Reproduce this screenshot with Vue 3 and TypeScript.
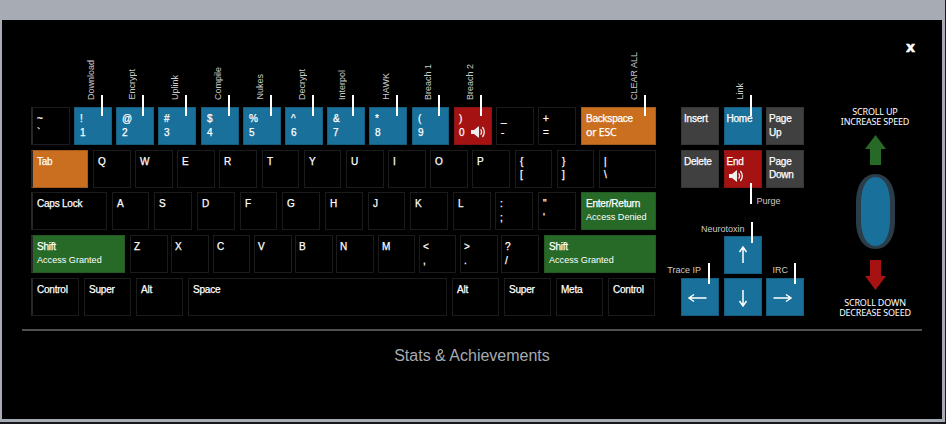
<script setup lang="ts">
type Tone = 'plain' | 'blue' | 'red' | 'orange' | 'green' | 'gray'

interface Key {
  start: number
  end: number
  lines: string[]
  tone: Tone
  tag?: string
  mark?: number
  sound?: boolean
  kind?: string
}

const BOARD_LEFT = 31

const k = (start: number, end: number, text: string, tone: Tone = 'plain', extra: Partial<Key> = {}): Key => ({
  start,
  end,
  lines: text.split('\n'),
  tone,
  ...extra,
})

const rows: Key[][] = [
  [
    k(31, 70, '~\n`'),
    k(74, 112, '!\n1', 'blue', { tag: 'Download', mark: 26 }),
    k(116, 154, '@\n2', 'blue', { tag: 'Encrypt', mark: 25 }),
    k(158, 196, '#\n3', 'blue', { tag: 'Uplink', mark: 26 }),
    k(201, 239, '$\n4', 'blue', { tag: 'Compile', mark: 26 }),
    k(243, 281, '%\n5', 'blue', { tag: 'Nukes', mark: 26 }),
    k(285, 323, '^\n6', 'blue', { tag: 'Decrypt', mark: 26 }),
    k(327, 365, '&\n7', 'blue', { tag: 'Interpol', mark: 24 }),
    k(369, 407, '*\n8', 'blue', { tag: 'HAWK', mark: 26 }),
    k(412, 449, '(\n9', 'blue', { tag: 'Breach 1', mark: 25 }),
    k(454, 492, ')\n0', 'red', { tag: 'Breach 2', mark: 25, sound: true }),
    k(496, 534, '_\n-'),
    k(538, 576, '+\n='),
    k(581, 656, 'Backspace\nor ESC', 'orange', { tag: 'CLEAR ALL', mark: 62, kind: 'escape' }),
  ],
  [
    k(31, 88, 'Tab', 'orange'),
    k(93, 131, 'Q'),
    k(135, 173, 'W'),
    k(177, 215, 'E'),
    k(219, 257, 'R'),
    k(262, 299, 'T'),
    k(304, 341, 'Y'),
    k(346, 384, 'U'),
    k(388, 426, 'I'),
    k(430, 468, 'O'),
    k(472, 510, 'P'),
    k(515, 552, '{\n['),
    k(557, 594, '}\n]'),
    k(599, 656, '|\n\\'),
  ],
  [
    k(31, 107, 'Caps Lock'),
    k(112, 149, 'A'),
    k(154, 192, 'S'),
    k(197, 235, 'D'),
    k(240, 277, 'F'),
    k(282, 320, 'G'),
    k(325, 363, 'H'),
    k(368, 405, 'J'),
    k(410, 448, 'K'),
    k(453, 491, 'L'),
    k(495, 533, ':\n;'),
    k(538, 576, '"\n\''),
    k(581, 656, 'Enter/Return\nAccess Denied', 'green', { kind: 'access' }),
  ],
  [
    k(31, 125, 'Shift\nAccess Granted', 'green', { kind: 'access' }),
    k(130, 168, 'Z'),
    k(171, 209, 'X'),
    k(213, 250, 'C'),
    k(254, 292, 'V'),
    k(295, 333, 'B'),
    k(336, 374, 'N'),
    k(378, 415, 'M'),
    k(419, 456, '<\n,'),
    k(460, 498, '>\n.'),
    k(501, 539, '?\n/'),
    k(544, 656, 'Shift\nAccess Granted', 'green', { kind: 'access' }),
  ],
  [
    k(31, 79, 'Control'),
    k(84, 131, 'Super'),
    k(136, 183, 'Alt'),
    k(188, 447, 'Space'),
    k(452, 499, 'Alt'),
    k(504, 551, 'Super'),
    k(556, 603, 'Meta'),
    k(608, 655, 'Control'),
  ],
]

const keyStyle = (row: Key[], i: number) => ({
  width: `${row[i].end - row[i].start}px`,
  marginLeft: `${row[i].start - (i ? row[i - 1].end : BOARD_LEFT)}px`,
})
</script>

<template>
  <div class="page">
    <main class="panel">
      <span class="close">x</span>
      <section class="controls">
        <div class="keyboard">
          <div v-for="(row, r) in rows" :key="r" class="row">
            <div v-for="(key, i) in row" :key="i" class="key" :class="[key.tone, key.kind]" :style="keyStyle(row, i)">
              <span v-for="(line, n) in key.lines" :key="n" class="line">{{ line }}</span>
              <svg v-if="key.sound" class="sound" viewBox="0 0 15 12">
                <path d="M0 4h3l5-4v12L3 8H0z" fill="#eee" />
                <path d="M9.6 3.4q2 2.6 0 5.2M11.4 1q3.8 5 0 10" fill="none" stroke="#eee" stroke-width="1.3" />
              </svg>
              <div v-if="key.tag" class="callout" :style="{ left: `${key.mark}px` }">
                <span class="tag">{{ key.tag }}</span>
              </div>
            </div>
          </div>
        </div>

        <div class="side">
          <div class="nav">
            <div class="key gray"><span class="line">Insert</span></div>
            <div class="key blue">
              <span class="line">Home</span>
              <div class="callout link"><span class="tag">Link</span></div>
            </div>
            <div class="key gray"><span class="line">Page</span><span class="line">Up</span></div>
            <div class="key gray"><span class="line">Delete</span></div>
            <div class="key red">
              <span class="line">End</span>
              <svg class="sound end" viewBox="0 0 15 12">
                <path d="M0 4h3l5-4v12L3 8H0z" fill="#eee" />
                <path d="M9.6 3.4q2 2.6 0 5.2M11.4 1q3.8 5 0 10" fill="none" stroke="#eee" stroke-width="1.3" />
              </svg>
              <div class="callout purge"><span class="note">Purge</span></div>
            </div>
            <div class="key gray"><span class="line">Page</span><span class="line">Down</span></div>
          </div>
          <div class="arrows">
            <div class="key blue up">
              <svg class="arrow" viewBox="0 0 38 38"><path d="M19 27V11M15.5 16L19 11l3.5 5" /></svg>
              <div class="callout neuro"><span class="note">Neurotoxin</span></div>
            </div>
            <div class="key blue left">
              <svg class="arrow" viewBox="0 0 38 38"><path d="M25.5 20H8.5M13 16.5L8 20l5 3.5" /></svg>
              <div class="callout trace"><span class="note">Trace IP</span></div>
            </div>
            <div class="key blue">
              <svg class="arrow" viewBox="0 0 38 38"><path d="M19 12V28M15.5 23L19 28l3.5-5" /></svg>
            </div>
            <div class="key blue">
              <svg class="arrow" viewBox="0 0 38 38"><path d="M7.5 20H24.5M20 16.5L25 20l-5 3.5" /></svg>
              <div class="callout irc"><span class="note">IRC</span></div>
            </div>
          </div>
        </div>

        <div class="scroll">
          <p class="caption">SCROLL UP<br />INCREASE SPEED</p>
          <svg class="pointer" viewBox="0 0 21 30"><path d="M10.5 0L21 14H16V30H5V14H0z" fill="#276a27" /></svg>
          <svg class="wheel" viewBox="0 0 39 75">
            <path d="M19.5 0C32 0 39 12 39 28V47C39 63 32 75 19.5 75S0 63 0 47V28C0 12 7 0 19.5 0z" fill="#2b3d48" />
            <path d="M19.5 3C29 3 34 15 34 29V46C34 60 29 72 19.5 72S5 60 5 46V29C5 15 10 3 19.5 3z" fill="#18709b" />
          </svg>
          <svg class="pointer" viewBox="0 0 21 30"><path d="M5 0H16V16H21L10.5 30L0 16H5z" fill="#a51212" /></svg>
          <p class="caption">SCROLL DOWN<br />DECREASE SOEED</p>
        </div>
      </section>
      <h2 class="stats">Stats &amp; Achievements</h2>
    </main>
  </div>
</template>

<style>
body {
  background: #17181c;
  overflow: hidden;
}
</style>

<style scoped>
.page {
  box-sizing: border-box;
  width: 945px;
  height: 422px;
  padding: 20px 3px 3px 2px;
  background: #a6abb4;
  font-family: "Liberation Sans", Arial, sans-serif;
}
.panel {
  position: relative;
  box-sizing: border-box;
  height: 399px;
  padding: 87px 20px 0;
  background: #000;
}
.close {
  position: absolute;
  top: 17px;
  right: 27px;
  color: #fff;
  font: bold 14px/20px "DejaVu Sans", sans-serif;
  -webkit-text-stroke: 0.5px #fff;
}
.controls {
  display: flex;
  box-sizing: border-box;
  height: 224px;
  padding-left: 9px;
  border-bottom: 2px solid #505050;
}
.keyboard {
  display: flex;
  flex-direction: column;
  gap: 4.7px;
  width: 625px;
}
.row {
  display: flex;
}
.key {
  position: relative;
  box-sizing: border-box;
  flex: none;
  height: 38px;
  padding: 4px 0 0 4px;
  border: 1px solid #1b1b1b;
  color: #fff;
  font-size: 10px;
  letter-spacing: -0.22px;
  line-height: 13.5px;
  -webkit-text-stroke: 0.25px #fff;
  white-space: nowrap;
}
.row .key:first-child {
  border-left: 2px solid #262626;
}
.row:nth-child(4) .key.plain {
  padding-left: 3px;
}
.row .key.blue {
  padding-left: 5px;
}
.key.blue {
  background: #18709b;
  border-color: #175d80;
}
.key.red {
  background: #a51212;
  border-color: #861212;
}
.key.orange {
  background: #ca6e20;
  border-color: #a45b1e;
}
.key.green {
  background: #276a27;
  border-color: #235a23;
}
.key.gray {
  background: #404040;
  border-color: #363636;
}
.line {
  display: block;
}
.access .line:nth-child(2) {
  padding-top: 0.5px;
  font-size: 9.1px;
  letter-spacing: 0;
  -webkit-text-stroke: 0;
}
.escape .line:nth-child(2) {
  font-family: "Noto Sans", sans-serif;
  font-size: 10.5px;
}
.sound {
  position: absolute;
  left: 16px;
  top: 18px;
  width: 15px;
  height: 12px;
}
.sound.end {
  left: 4px;
  top: 19px;
}
.callout {
  position: absolute;
  top: -13px;
  width: 2px;
  height: 21px;
  background: #fff;
  color: #ccc;
  font-size: 9px;
  letter-spacing: 0;
  -webkit-text-stroke: 0;
}
.tag {
  position: absolute;
  right: 7px;
  bottom: 16px;
  writing-mode: vertical-rl;
  transform: rotate(180deg);
  line-height: 10px;
}
.note {
  position: absolute;
  right: 8px;
  top: 2px;
  line-height: 10px;
}
.side {
  width: 124px;
  margin-left: 25px;
}
.nav {
  display: grid;
  grid-template-columns: repeat(3, 38px);
  gap: 4.5px;
}
.nav .key {
  padding-left: 2px;
}
.link {
  left: 25px;
}
.purge {
  left: 25px;
  top: 32px;
}
.purge .note {
  left: 7px;
  right: auto;
  top: 13px;
}
.arrows {
  display: grid;
  grid-template-columns: repeat(3, 38px);
  gap: 4.5px;
  margin-top: 48px;
}
.up {
  grid-column: 2;
}
.left {
  grid-column: 1;
}
.arrow {
  position: absolute;
  top: -1px;
  left: -1px;
  width: 38px;
  height: 38px;
}
.arrow path {
  fill: none;
  stroke: #fff;
  stroke-width: 1.5;
}
.neuro {
  left: 26px;
  top: -15px;
}
.trace {
  left: 26px;
  top: -16px;
}
.trace .note {
  right: 9px;
}
.irc {
  left: 27px;
  top: -16px;
}
.scroll {
  display: flex;
  flex-direction: column;
  align-items: center;
  width: 90px;
  margin-left: 25px;
}
.caption {
  margin: 0;
  color: #fff;
  font: 9px/10px "Noto Sans", sans-serif;
  letter-spacing: -0.2px;
  text-align: center;
  white-space: nowrap;
}
.pointer {
  width: 21px;
  height: 30px;
  margin: 8px 0 9px;
}
.wheel {
  width: 39px;
  height: 75px;
}
.wheel + .pointer {
  margin: 11px 0 8px;
}
.stats {
  margin: 15px 0 0;
  color: #a6abb4;
  font-size: 16px;
  font-weight: 400;
  line-height: 20px;
  text-align: center;
}
</style>
